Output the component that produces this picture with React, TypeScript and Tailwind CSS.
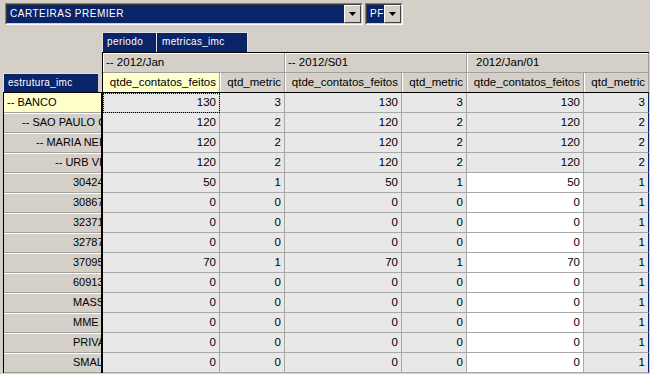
import React from "react";

interface Row {
  label: string;
  indent: string;
  vals: number[];
}

const ROWS: Row[] = [
  { label: "-- BANCO", indent: "pl-[3px]", vals: [130, 3, 130, 3, 130, 3] },
  { label: "-- SAO PAULO C.", indent: "pl-[18px]", vals: [120, 2, 120, 2, 120, 2] },
  { label: "-- MARIA NEI", indent: "pl-[32px]", vals: [120, 2, 120, 2, 120, 2] },
  { label: "-- URB VIL", indent: "pl-[51px]", vals: [120, 2, 120, 2, 120, 2] },
  { label: "30424", indent: "pl-[69px]", vals: [50, 1, 50, 1, 50, 1] },
  { label: "30867", indent: "pl-[69px]", vals: [0, 0, 0, 0, 0, 1] },
  { label: "32371", indent: "pl-[69px]", vals: [0, 0, 0, 0, 0, 1] },
  { label: "32787", indent: "pl-[69px]", vals: [0, 0, 0, 0, 0, 1] },
  { label: "37095", indent: "pl-[69px]", vals: [70, 1, 70, 1, 70, 1] },
  { label: "60913", indent: "pl-[69px]", vals: [0, 0, 0, 0, 0, 1] },
  { label: "MASS", indent: "pl-[69px]", vals: [0, 0, 0, 0, 0, 1] },
  { label: "MME E", indent: "pl-[69px]", vals: [0, 0, 0, 0, 0, 1] },
  { label: "PRIVA", indent: "pl-[69px]", vals: [0, 0, 0, 0, 0, 1] },
  { label: "SMALL", indent: "pl-[69px]", vals: [0, 0, 0, 0, 0, 1] },
];

const GROUPS = [
  { label: "-- 2012/Jan", pad: "pl-[3px]" },
  { label: "-- 2012/S01", pad: "pl-[3px]" },
  { label: "2012/Jan/01", pad: "pl-[9px]" },
];

function Arrow() {
  return (
    <svg width="7" height="4" viewBox="0 0 7 4">
      <path d="M0 0h7L3.5 4z" fill="#000" />
    </svg>
  );
}

function Combo({ width, label }: { width: string; label: string }) {
  return (
    <div
      className={`${width} h-[22px] border border-t-[#808080] border-l-[#808080] border-b-white border-r-white`}
    >
      <div className="h-full flex border border-t-[#404040] border-l-[#404040] border-b-[#d4d0c8] border-r-[#d4d0c8]">
        <div className="flex-1 bg-[#0a246a] text-white text-[10px] tracking-[0.5px] leading-[18px] pl-[3px] whitespace-nowrap overflow-hidden">
          {label}
        </div>
        <div className="w-[17px] h-full flex items-center justify-center bg-[#d4d0c8] border border-t-white border-l-white border-b-[#404040] border-r-[#404040]">
          <Arrow />
        </div>
      </div>
    </div>
  );
}

function DataRow({ row, index }: { row: Row; index: number }) {
  return (
    <div className="flex h-[20px]">
      {row.vals.map((v, i) => {
        const wide = i % 2 === 0;
        const white = i === 4 && index >= 4;
        const focus = index === 0 && i === 0;
        const last = i === 5;
        return (
          <div
            key={i}
            className={`${wide ? "w-[117px]" : "w-[65px]"} h-[20px] border-b border-r border-b-[#a8a8a8] ${
              last ? "border-r-[#0a246a]" : "border-r-[#a8a8a8]"
            } ${white ? "bg-white" : "bg-[#e8e8e8]"} text-right pr-[3px] leading-[19px] ${
              focus ? "outline-1 outline-dotted outline-black outline-offset-[-1px]" : ""
            }`}
          >
            {v}
          </div>
        );
      })}
    </div>
  );
}

export default function App() {
  return (
    <div className="w-[650px] h-[374px] overflow-hidden bg-[#d4d0c8] text-black font-['Liberation_Sans',Arial,sans-serif] text-[11.5px]">
      {/* top selectors */}
      <div className="flex items-start h-[32px] pt-[3px] pl-[5px]">
        <Combo width="w-[358px]" label="CARTEIRAS PREMIER" />
        <div className="ml-[2px]">
          <Combo width="w-[38px]" label="PF" />
        </div>
      </div>

      <div className="flex">
        {/* row axis */}
        <div className="w-[102px] shrink-0">
          <div className="h-[41px]" />
          <div className="ml-[3px] w-[95px] h-[19px] bg-[#0a246a] border-t border-l border-[#e0e0e0] text-white text-[10px] tracking-[0.3px] leading-[17px] pl-[4px]">
            estrutura_imc
          </div>
          <div className="ml-[3px] w-[99px] border-l border-t border-r border-black">
            {ROWS.map((r, i) => (
              <div
                key={r.label}
                className={`h-[20px] border-b border-[#a0a0a0] whitespace-nowrap overflow-hidden text-[11px] leading-[19px] ${r.indent} ${
                  i === 0 ? "bg-[#ffffcc]" : "bg-[#d4d0c8] shadow-[inset_0_1px_0_#ffffff]"
                }`}
              >
                {r.label}
              </div>
            ))}
          </div>
        </div>

        {/* column axis + data */}
        <div className="flex-1">
          <div className="flex h-[20px]">
            <div className="w-[54px] h-[20px] bg-[#0a246a] border-t border-l border-[#e0e0e0] text-white text-[10px] tracking-[0.4px] leading-[18px] pl-[4px]">
              periodo
            </div>
            <div className="w-[92px] h-[20px] bg-[#0a246a] border-t border-l border-r border-[#e0e0e0] text-white text-[10px] tracking-[0.3px] leading-[18px] pl-[5px]">
              metricas_imc
            </div>
          </div>
          <div className="w-[547px] border-l border-t border-black">
            <div className="flex h-[20px]">
              {GROUPS.map((g) => (
                <div
                  key={g.label}
                  className={`w-[182px] h-[20px] border-b border-r border-[#a0a0a0] shadow-[inset_1px_1px_0_#ffffff] leading-[19px] ${g.pad}`}
                >
                  {g.label}
                </div>
              ))}
            </div>
            <div className="flex h-[20px] border-b border-black">
              {[0, 1, 2, 3, 4, 5].map((i) => (
                <div
                  key={i}
                  className={`${i % 2 === 0 ? "w-[117px]" : "w-[65px]"} h-[19px] border-r border-[#a0a0a0] text-right pr-[3px] leading-[19px] ${
                    i === 0 ? "bg-[#ffffcc]" : "shadow-[inset_1px_0_0_#ffffff]"
                  }`}
                >
                  {i % 2 === 0 ? "qtde_contatos_feitos" : "qtd_metric"}
                </div>
              ))}
            </div>
            {ROWS.map((r, i) => (
              <DataRow key={r.label} row={r} index={i} />
            ))}
          </div>
        </div>
      </div>
    </div>
  );
}
